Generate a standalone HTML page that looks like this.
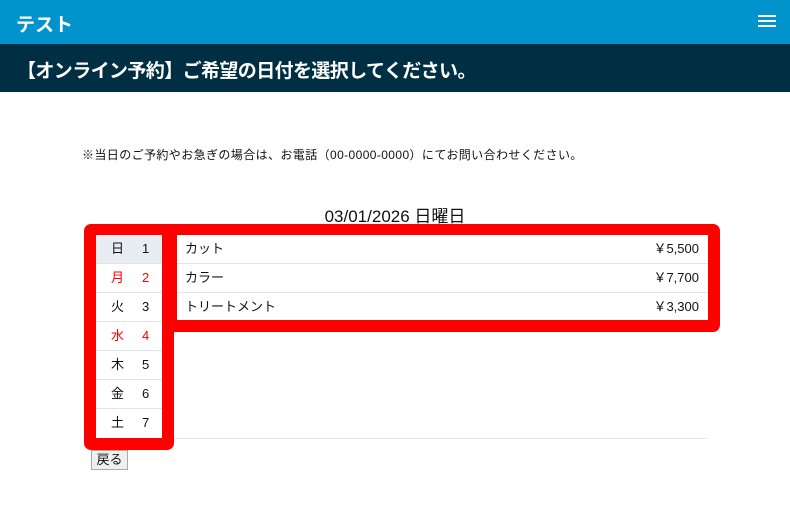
<!DOCTYPE html><html><head><meta charset="utf-8"><style>
body{margin:0;width:790px;height:520px;position:relative;background:#fff;font-family:"Liberation Sans","Noto Sans CJK JP",sans-serif;color:#111;overflow:hidden}
.a{position:absolute}
.top{left:0;top:0;width:790px;height:44px;background:#0093cc;color:#fff;font-size:19px;font-weight:bold}
.sub{left:0;top:44px;width:790px;height:48px;background:#002f44;color:#fff;font-size:19px;font-weight:bold}
.red{background:#f00;border-radius:7px}
.row{position:absolute;height:29px;line-height:28px;font-size:13px;border-bottom:1px solid #e4e4e4;box-sizing:border-box}
</style></head><body>
<div class="a top"><span class="a" style="left:16px;top:10px">テスト</span>
<div class="a" style="left:758px;top:15px;width:18px;height:2px;background:#fff;box-shadow:0 5px 0 #fff,0 10px 0 #fff"></div></div>
<div class="a sub"><span class="a" style="left:17px;top:12px;letter-spacing:-0.6px">【オンライン予約】ご希望の日付を選択してください。</span></div>
<div class="a" style="left:82px;top:146px;font-size:12px;letter-spacing:0.4px">※当日のご予約やお急ぎの場合は、お電話（00-0000-0000）にてお問い合わせください。</div>
<div class="a" style="left:0;width:790px;top:202px;text-align:center;font-size:17px">03/01/2026 日曜日</div>
<div class="a" style="left:96px;top:438px;width:611px;height:1px;background:#e4e4e4"></div>
<div class="a red" style="left:84px;top:224px;width:90px;height:226px"></div>
<div class="a red" style="left:160px;top:224px;width:560px;height:108px"></div>
<div class="a" style="left:96px;top:235px;width:66px;height:203px;background:#fff"></div>
<div class="a" style="left:177px;top:235px;width:531px;height:85px;background:#fff"></div>
<div class="row" style="left:96px;top:235px;width:66px;background:#e8edf3"><span class="a" style="left:15px">日</span><span class="a" style="left:46px">1</span></div>
<div class="row" style="left:96px;top:264px;width:66px;color:#f00"><span class="a" style="left:15px">月</span><span class="a" style="left:46px">2</span></div>
<div class="row" style="left:96px;top:293px;width:66px"><span class="a" style="left:15px">火</span><span class="a" style="left:46px">3</span></div>
<div class="row" style="left:96px;top:322px;width:66px;color:#f00"><span class="a" style="left:15px">水</span><span class="a" style="left:46px">4</span></div>
<div class="row" style="left:96px;top:351px;width:66px"><span class="a" style="left:15px">木</span><span class="a" style="left:46px">5</span></div>
<div class="row" style="left:96px;top:380px;width:66px"><span class="a" style="left:15px">金</span><span class="a" style="left:46px">6</span></div>
<div class="row" style="left:96px;top:409px;width:66px;border:none"><span class="a" style="left:15px">土</span><span class="a" style="left:46px">7</span></div>
<div class="row" style="left:177px;top:235px;width:531px"><span class="a" style="left:8px">カット</span><span class="a" style="right:9px">￥5,500</span></div>
<div class="row" style="left:177px;top:264px;width:531px"><span class="a" style="left:8px">カラー</span><span class="a" style="right:9px">￥7,700</span></div>
<div class="row" style="left:177px;top:293px;width:531px;border:none"><span class="a" style="left:8px">トリートメント</span><span class="a" style="right:9px">￥3,300</span></div>
<div class="a" style="left:91px;top:450px;width:35px;height:18px;border:1px solid #aaa;background:#efefef;font-size:13px;line-height:18px;text-align:center">戻る</div>
</body></html>
